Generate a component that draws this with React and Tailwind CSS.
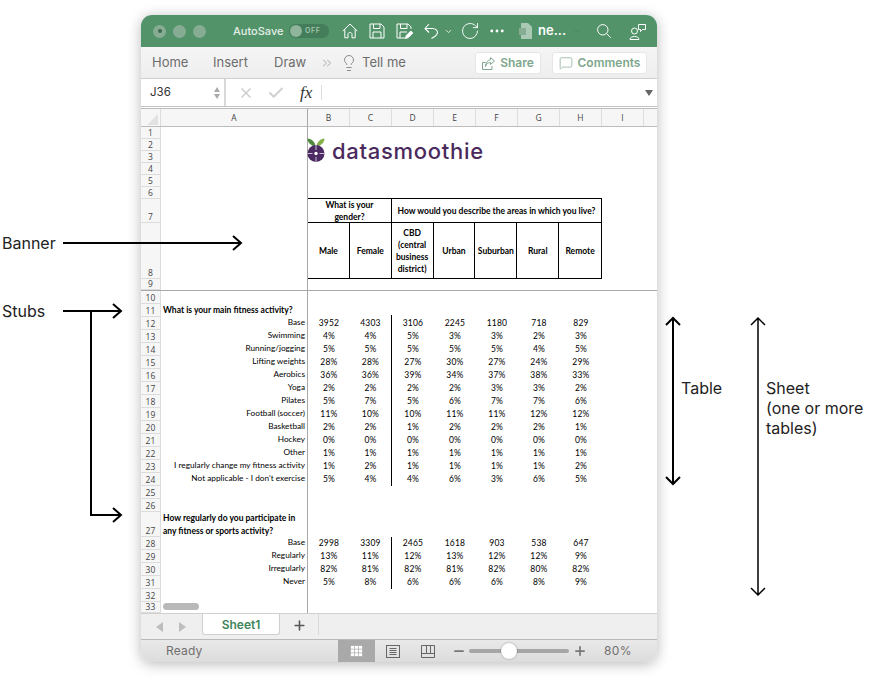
import {
  ChevronDown,
  RotateCw,
  Ellipsis,
  Lightbulb,
  ChevronsRight,
  X,
  Check,
  MessageSquare,
  Minus,
  Plus,
} from "lucide-react";

const columns = ["B", "C", "D", "E", "F", "G", "H", "I"];

const topRows = [
  { n: 1, h: "h-[12px]" },
  { n: 2, h: "h-[12px]" },
  { n: 3, h: "h-[12px]" },
  { n: 4, h: "h-[12px]" },
  { n: 5, h: "h-[12px]" },
  { n: 6, h: "h-[12px]" },
  { n: 7, h: "h-[24px]" },
  { n: 8, h: "h-[56px]" },
  { n: 9, h: "h-[11px]" },
];

const fitnessRows = [
  [12, "Base", ["3952", "4303", "3106", "2245", "1180", "718", "829"]],
  [13, "Swimming", ["4%", "4%", "5%", "3%", "3%", "2%", "3%"]],
  [14, "Running/jogging", ["5%", "5%", "5%", "5%", "5%", "4%", "5%"]],
  [15, "Lifting weights", ["28%", "28%", "27%", "30%", "27%", "24%", "29%"]],
  [16, "Aerobics", ["36%", "36%", "39%", "34%", "37%", "38%", "33%"]],
  [17, "Yoga", ["2%", "2%", "2%", "2%", "3%", "3%", "2%"]],
  [18, "Pilates", ["5%", "7%", "5%", "6%", "7%", "7%", "6%"]],
  [19, "Football (soccer)", ["11%", "10%", "10%", "11%", "11%", "12%", "12%"]],
  [20, "Basketball", ["2%", "2%", "1%", "2%", "2%", "2%", "1%"]],
  [21, "Hockey", ["0%", "0%", "0%", "0%", "0%", "0%", "0%"]],
  [22, "Other", ["1%", "1%", "1%", "1%", "1%", "1%", "1%"]],
  [23, "I regularly change my fitness activity", ["1%", "2%", "1%", "1%", "1%", "1%", "2%"]],
  [24, "Not applicable - I don't exercise", ["5%", "4%", "4%", "6%", "3%", "6%", "5%"]],
];

const regularRows = [
  [28, "Base", ["2998", "3309", "2465", "1618", "903", "538", "647"]],
  [29, "Regularly", ["13%", "11%", "12%", "13%", "12%", "12%", "9%"]],
  [30, "Irregularly", ["82%", "81%", "82%", "81%", "82%", "80%", "82%"]],
  [31, "Never", ["5%", "8%", "6%", "6%", "6%", "8%", "9%"]],
];

const areaHeaders = ["Urban", "Suburban", "Rural", "Remote"];

function RowNum({ n, className = "h-[13px]" }) {
  return (
    <div className={`w-[20px] shrink-0 ${className} flex items-end justify-center border-b border-r border-[#dcdcdc] bg-[#f6f6f6] font-['Open_Sans',sans-serif] text-[8.500px] leading-[10px] tracking-[0.2px] text-[#444]`}>
      {n}
    </div>
  );
}

function EmptyRow({ n, className }) {
  return (
    <div className="flex">
      <RowNum n={n} className={className} />
      <div className="w-[147px] border-r border-[#a8a8a8]" />
    </div>
  );
}

function DataRow({ n, label, values }) {
  return (
    <div className="flex h-[13px] items-center">
      <RowNum n={n} />
      <div className="h-full w-[147px] border-r border-[#a8a8a8] pr-[2px] text-right text-[8.250px] leading-[11px] whitespace-nowrap">
        {label}
      </div>
      {values.map((v, i) => (
        <div
          key={i}
          className={`h-full w-[42px] text-center leading-[13px] tracking-[0.2px] ${i === 1 ? "border-r border-black" : ""}`}
        >
          {v}
        </div>
      ))}
    </div>
  );
}

function Logo() {
  return (
    <div className="flex items-center">
      <svg width="18" height="24" viewBox="0 0 18 24" className="shrink-0">
        <path d="M8.500 8C8 4 5 1 0.500 0.500C0.500 4.500 4 8 8.500 8Z" fill="#4f8a3c" />
        <path d="M9.500 8C10 4 13 1 17.500 0.500C17.500 4.500 14 8 9.500 8Z" fill="#86b04a" />
        <circle cx="9" cy="15.500" r="8.500" fill="#4b2a63" />
        <circle cx="9" cy="15.500" r="1.700" fill="#fff" />
        <path d="M9 7V12M9 19V24M0.500 15.500H5.500M12.500 15.500H17.500" stroke="#fff" strokeWidth="0.7" />
      </svg>
      <span className="ml-[7px] mt-[2px] font-['Inter',sans-serif] text-[22px] font-medium leading-none tracking-[0.7px] text-[#4a2a5c]">
        datasmoothie
      </span>
    </div>
  );
}

function TitleBar() {
  return (
    <div className="flex h-[32px] items-center bg-[#52936a] text-white">
      <div className="ml-[12px] flex gap-[7px]">
        <span className="flex h-[13px] w-[13px] items-center justify-center rounded-full bg-[#86ac93]">
          <span className="h-[4px] w-[4px] rounded-full bg-[#3f6a4f]" />
        </span>
        <span className="h-[13px] w-[13px] rounded-full bg-[#86ac93]" />
        <span className="h-[13px] w-[13px] rounded-full bg-[#86ac93]" />
      </div>
      <span className="ml-[27px] w-[50px] whitespace-nowrap text-[11px] font-medium text-[#e3efe7]">AutoSave</span>
      <div className="ml-[6px] flex h-[14px] w-[40px] items-center rounded-full bg-[#437d59] pl-[1px]">
        <span className="h-[12px] w-[12px] rounded-full bg-[#8fb59c]" />
        <span className="ml-[3px] text-[7px] font-semibold tracking-[0.6px] text-[#a6c7b1]">OFF</span>
      </div>
      <svg width="16" height="16" viewBox="0 0 16 16" fill="none" stroke="white" strokeWidth="1" strokeLinejoin="round" className="ml-[13px]">
        <path d="M0.800 8L8 1L15.200 8M2.800 6.300V14.800H6V11.300C6 8.800 10 8.800 10 11.300V14.800H13.200V6.300" />
      </svg>
      <svg width="16" height="16" viewBox="0 0 16 16" fill="none" stroke="white" strokeWidth="1" strokeLinejoin="round" className="ml-[11px]">
        <path d="M1 1H12L15 4V15H1ZM4.500 1V5.500H11V1M4 15V9H12V15" />
      </svg>
      <svg width="17" height="16" viewBox="0 0 17 16" fill="none" stroke="white" strokeWidth="1" strokeLinejoin="round" className="ml-[11px]">
        <path d="M9 15H1V1H12L15 4V6M4.500 1V5.500H11V1M4 15V9H11" />
        <path d="M9.500 15.500L10.300 12.500L14.800 8L16.800 10L12.300 14.500Z" fill="white" />
      </svg>
      <svg width="14" height="16" viewBox="0 0 14 16" fill="none" stroke="white" strokeWidth="1.100" strokeLinejoin="round" className="ml-[11px]">
        <path d="M5 1L1 5.500L5 9.500M1 5.500H8.500C12 5.500 13.500 8 13.500 9.500C13.500 11 12.500 12 11.500 13L7.500 15.500" />
      </svg>
      <ChevronDown size={9} strokeWidth={2} className="ml-[6px]" />
      <RotateCw size={20} strokeWidth={1.100} className="ml-[7px]" />
      <Ellipsis size={18} strokeWidth={1.800} className="ml-[8px]" />
      <svg width="14" height="16" viewBox="0 0 14 16" className="ml-[13px]">
        <path d="M2 0H9L13 4V16H2Z" fill="#a9c9b4" />
        <rect x="0" y="5" width="7" height="7" fill="#86ac93" />
      </svg>
      <span className="ml-[5px] w-[27px] whitespace-nowrap text-[13px] font-semibold">ne...</span>
      <ChevronDown size={10} className="ml-[7px] text-[#4a8560]" />
      <svg width="14" height="14" viewBox="0 0 14 14" fill="none" stroke="white" strokeWidth="1" className="ml-[15px]">
        <circle cx="5.800" cy="5.800" r="5.200" />
        <path d="M9.500 9.500L13.800 13.800" />
      </svg>
      <svg width="17" height="17" viewBox="0 0 17 17" fill="none" stroke="white" strokeWidth="1" className="ml-[18px]">
        <circle cx="5.500" cy="8" r="3" />
        <path d="M1 16.500C1 12.500 10 12.500 10 16.500Z" />
        <path d="M9.500 1.500H16.500V6.500H13.500L11.500 8.500V6.500H9.500Z" />
      </svg>
    </div>
  );
}

function Ribbon() {
  return (
    <div className="flex h-[32px] items-center border-b border-[#cfcfcf] bg-gradient-to-b from-[#f5f5f5] to-[#eeeeee] text-[13px] text-[#6d6d6d]">
      <span className="ml-[11px] w-[37px]">Home</span>
      <span className="ml-[24px] w-[35px]">Insert</span>
      <span className="ml-[26px] w-[32px]">Draw</span>
      <ChevronsRight size={14} className="ml-[14px] text-[#c4c4c4]" />
      <Lightbulb size={18} strokeWidth={1.100} className="ml-[6px] text-[#777]" />
      <span className="ml-[4px]">Tell me</span>
      <div className="ml-auto mr-[10px] mt-[1px] flex gap-[11px] text-[12px] font-semibold text-[#7ea78d]">
        <div className="flex h-[22px] w-[66px] items-center justify-center gap-[5px] rounded-[3px] border border-[#e6e6e6] bg-white">
          <svg width="13" height="13" viewBox="0 0 13 13" fill="none" stroke="currentColor" strokeWidth="1">
            <path d="M3.500 5.500H0.500V12.500H10V9" />
            <path d="M8.500 0.500L12.500 4L8.500 7.500V5.500C6 5.500 4 7 3.500 9.500C3.500 6 5.500 3 8.500 2.700Z" />
          </svg>
          Share
        </div>
        <div className="flex h-[22px] w-[95px] items-center justify-center gap-[5px] rounded-[3px] border border-[#e6e6e6] bg-white">
          <MessageSquare size={14} strokeWidth={1.200} />
          Comments
        </div>
      </div>
    </div>
  );
}

function FormulaBar() {
  return (
    <div className="flex h-[28px] items-center border-b border-[#c4c4c4] bg-white">
      <div className="flex h-full w-[85px] items-center justify-between border-r-2 border-[#d9d9d9] pl-[9px] pr-[4px] text-[11.500px] text-[#333]">
        J36
        <div className="flex flex-col gap-[2px]">
          <span className="h-0 w-0 border-x-[3.500px] border-b-[5px] border-x-transparent border-b-[#aaa]" />
          <span className="h-0 w-0 border-x-[3.500px] border-t-[5px] border-x-transparent border-t-[#aaa]" />
        </div>
      </div>
      <X size={16} strokeWidth={2.600} className="ml-[12px] text-[#d0d0d0]" />
      <Check size={18} strokeWidth={2.600} className="ml-[13px] text-[#d0d0d0]" />
      <span className="ml-[15px] w-[15px] font-['Liberation_Serif',serif] text-[17px] italic leading-none text-[#333]">fx</span>
      <span className="ml-[6px] h-[15px] w-px bg-[#dddddd]" />
      <span className="ml-auto mr-[4px] h-0 w-0 border-x-[4px] border-t-[6px] border-x-transparent border-t-[#666]" />
    </div>
  );
}

function ColumnHeader() {
  return (
    <div className="mt-px flex h-[19px] border-b border-t border-[#bcbcbc] bg-[#f6f6f6] font-['Open_Sans',sans-serif] text-[8.500px] leading-[17px] text-[#444]">
      <div className="flex w-[20px] items-end border-r border-[#dcdcdc]">
        <span className="ml-[6px] mb-[1px] h-0 w-0 border-b-[11px] border-l-[11px] border-b-[#e2e2e2] border-l-transparent" />
      </div>
      <div className="w-[147px] border-r border-[#a8a8a8] text-center">A</div>
      {columns.map((c) => (
        <div key={c} className="w-[42px] border-r border-[#dedede] text-center">
          {c}
        </div>
      ))}
    </div>
  );
}

function BannerTable() {
  return (
    <div className="absolute left-0 top-[71px] w-[294px] text-center font-bold leading-[12px]">
      <div className="flex h-[24px] border-r border-t border-black">
        <div className="flex w-[84px] items-center justify-center border-r border-black">
          What is your
          <br />
          gender?
        </div>
        <div className="flex flex-1 items-center justify-center whitespace-nowrap">
          How would you describe the areas in which you live?
        </div>
      </div>
      <div className="flex h-[57px] border-y border-r border-black">
        <div className="flex w-[42px] items-center justify-center border-r border-black">Male</div>
        <div className="flex w-[42px] items-center justify-center border-r border-black">Female</div>
        <div className="flex w-[42px] items-center justify-center border-r border-black">
          CBD
          <br />
          (central
          <br />
          business
          <br />
          district)
        </div>
        {areaHeaders.map((h, i) => (
          <div
            key={h}
            className={`flex w-[42px] items-center justify-center ${i < 3 ? "border-r border-black" : ""}`}
          >
            {h}
          </div>
        ))}
      </div>
    </div>
  );
}

function Sheet() {
  return (
    <div className="relative h-[486px] overflow-hidden bg-white font-['Lato',sans-serif] text-[8.500px] text-black">
      {/* frozen banner */}
      <div className="relative border-b border-[#a8a8a8]">
        {topRows.map((r) => (
          <EmptyRow key={r.n} n={r.n} className={r.h} />
        ))}
        <div className="absolute left-[167px] top-0 w-[349px]">
          <div className="absolute left-[-1px] top-[11px]">
            <Logo />
          </div>
          <BannerTable />
        </div>
      </div>

      <EmptyRow n={10} />
      <div className="flex h-[13px] items-center">
        <RowNum n={11} />
        <div className="h-full w-[147px] border-r border-[#a8a8a8] pl-[2px] font-bold leading-[13px] whitespace-nowrap">
          What is your main fitness activity?
        </div>
        <div className="h-[2px] w-[84px] self-end border-r border-black" />
      </div>
      {fitnessRows.map(([n, label, values]) => (
        <DataRow key={n} n={n} label={label} values={values} />
      ))}
      <EmptyRow n={25} />
      <EmptyRow n={26} />
      <div className="flex h-[25px]">
        <RowNum n={27} className="h-[25px]" />
        <div className="h-full w-[147px] border-r border-[#a8a8a8] pl-[2px] font-bold leading-[13px] whitespace-nowrap">
          How regularly do you participate in
          <br />
          any fitness or sports activity?
        </div>
      </div>
      {regularRows.map(([n, label, values]) => (
        <DataRow key={n} n={n} label={label} values={values} />
      ))}
      <EmptyRow n={32} />
      <EmptyRow n={33} className="h-[11px]" />
      <span className="absolute bottom-[3px] left-[22px] h-[7px] w-[36px] rounded-full bg-[#b9b9b9]" />
    </div>
  );
}

function TabBar() {
  return (
    <div className="flex h-[26px] items-start border-t border-[#d0d0d0] bg-[#efefef]">
      <span className="ml-[15px] mt-[8px] h-0 w-0 border-y-[5px] border-r-[7px] border-y-transparent border-r-[#bdbdbd]" />
      <span className="ml-[16px] mt-[8px] h-0 w-0 border-y-[5px] border-l-[7px] border-y-transparent border-l-[#bdbdbd]" />
      <div className="ml-[16px] flex h-[21px] w-[78px] items-center justify-center rounded-b-[3px] border-x border-b border-[#cfcfcf] bg-white pt-[2px] text-[12px] font-semibold text-[#41845a]">
        Sheet1
      </div>
      <div className="flex h-[21px] w-[39px] items-center justify-center border-r border-[#d8d8d8] pt-[2px] text-[#555]">
        <Plus size={15} strokeWidth={2.500} />
      </div>
    </div>
  );
}

function StatusBar() {
  return (
    <div className="flex h-[23px] items-center border-t border-[#b9b9b9] bg-gradient-to-b from-[#e9e9e9] to-[#dcdcdc] text-[12px] text-[#707070]">
      <span className="ml-[25px] w-[34px] tracking-[0.2px]">Ready</span>
      <div className="ml-[138px] flex h-full w-[37px] items-center justify-center bg-[#a9a9a9]">
        <svg width="13" height="12" viewBox="0 0 13 12" fill="white" stroke="#a9a9a9" strokeWidth="0.7">
          <rect x="0.500" y="0.500" width="12" height="11" />
          <path d="M4.500 0.500V11.500M8.500 0.500V11.500M0.500 4.200H12.500M0.500 7.800H12.500" />
        </svg>
      </div>
      <svg width="14" height="13" viewBox="0 0 14 13" fill="none" stroke="#666" className="ml-[11px]">
        <rect x="0.500" y="0.500" width="13" height="12" />
        <path d="M3.500 3.500H10.500M3.500 5.500H10.500M3.500 7.500H10.500M3.500 9.500H10.500" />
      </svg>
      <svg width="14" height="13" viewBox="0 0 14 13" fill="none" stroke="#666" className="ml-[21px]">
        <path d="M0.500 0.500H13.500V12.500H0.500ZM0.500 8.500H13.500M5.500 0.500V8.500M9.500 0.500V8.500" />
      </svg>
      <Minus size={14} strokeWidth={3} className="ml-[17px] text-[#777]" />
      <div className="relative ml-[3px] h-[4px] w-[100px] rounded-full bg-[#a6a6a6]">
        <span className="absolute left-[32px] top-[-6px] h-[16px] w-[16px] rounded-full bg-white shadow-[0_0_2px_rgba(0,0,0,0.4)]" />
      </div>
      <Plus size={14} strokeWidth={3} className="ml-[4px] text-[#777]" />
      <span className="ml-[17px] tracking-[0.4px]">80%</span>
    </div>
  );
}

function Annotations() {
  return (
    <>
      <svg width="870" height="686" viewBox="0 0 870 686" fill="none" stroke="#000" strokeWidth="2" className="absolute inset-0">
        <path d="M63 243H240M233 236L241 243L233 250" />
        <path d="M63 311H120M113 304L121 311L113 318" />
        <path d="M91 311V515H120M113 508L121 515L113 522" />
        <path d="M673 318V484M666 325L673 318L680 325M666 477L673 484L680 477" />
        <path d="M758 318V595M751 325L758 318L765 325M751 588L758 595L765 588" strokeWidth="1.500" />
      </svg>
      <div className="absolute left-[2px] top-[233px] text-[16px] leading-[20px] text-[#222]">Banner</div>
      <div className="absolute left-[2px] top-[301px] text-[16px] leading-[20px] text-[#222]">Stubs</div>
      <div className="absolute left-[681px] top-[378px] text-[16px] leading-[20px] text-[#222]">Table</div>
      <div className="absolute left-[766px] top-[378px] text-[16px] leading-[20px] text-[#222]">
        Sheet
        <br />
        (one or more
        <br />
        tables)
      </div>
    </>
  );
}

export default function App() {
  return (
    <div className="relative h-[686px] w-[870px] overflow-hidden bg-white pl-[141px] pt-[15px] font-['Inter',sans-serif]">
      <div className="w-[516px] overflow-hidden rounded-[11px] bg-white shadow-[0_2px_14px_rgba(0,0,0,0.28)]">
        <TitleBar />
        <Ribbon />
        <FormulaBar />
        <ColumnHeader />
        <Sheet />
        <TabBar />
        <StatusBar />
      </div>
      <Annotations />
    </div>
  );
}
